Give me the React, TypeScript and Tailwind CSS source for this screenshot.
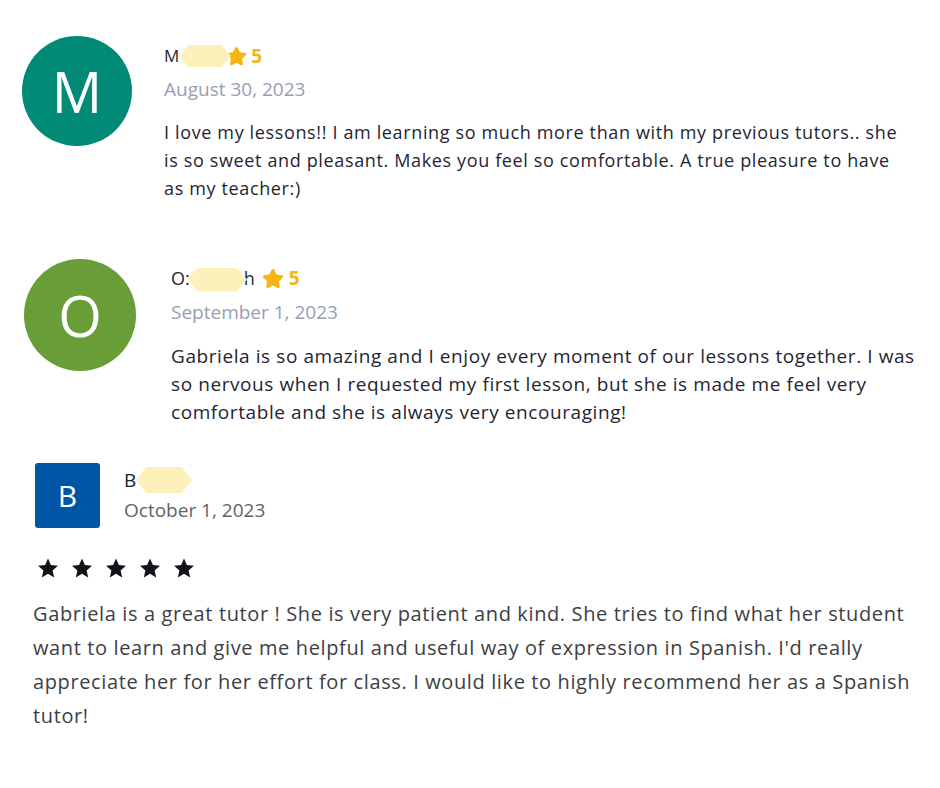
import { Star } from "lucide-react";

function Redact({ className }: { className: string }) {
  return (
    <span
      className={`absolute bg-[#fdf0bb] [clip-path:polygon(18%_0,82%_0,100%_50%,82%_100%,18%_100%,0_50%)] ${className}`}
    />
  );
}

function SmallStars() {
  return (
    <div className="flex items-center gap-[10px]">
      {[0, 1, 2, 3, 4].map((i) => (
        <svg key={i} viewBox="0 0 24 24" className="h-[24px] w-[24px] fill-[#111318]">
          <path d="M12 2.5l2.9 6.6 7.1.6-5.4 4.7 1.6 7-6.2-3.7-6.2 3.7 1.6-7L2 9.7l7.1-.6z" />
        </svg>
      ))}
    </div>
  );
}

export default function App() {
  return (
    <div className="w-[940px] h-[788px] bg-white text-[#1f2533] font-['Open_Sans',sans-serif]">
      {/* first review */}
      <div className="flex pl-[22px] pt-[36px]">
        <div className="w-[110px] h-[110px] shrink-0 rounded-full bg-[#018a76] flex items-center justify-center text-white text-[56px]">
          M
        </div>
        <div className="ml-[32px] pt-[8px]">
          <div className="relative flex items-center h-[24px] text-[17px]">
            <span>M</span>
            <Redact className="left-[15px] top-[1px] w-[52px] h-[22px]" />
            <span className="ml-[47px] flex items-center gap-[4px] text-[#f5b614] font-bold text-[19px]">
              <Star className="w-[21px] h-[21px] fill-[#f5b614] stroke-[#f5b614]" />
              5
            </span>
          </div>
          <div className="mt-[7px] text-[19px] text-[#94a0b4]">August 30, 2023</div>
          <p className="mt-[14px] text-[18px] leading-[28px] tracking-[0.64px] whitespace-nowrap">
            I love my lessons!! I am learning so much more than with my previous tutors.. she
            <br />
            is so sweet and pleasant. Makes you feel so comfortable. A true pleasure to have
            <br />
            as my teacher:)
          </p>
        </div>
      </div>

      {/* second review */}
      <div className="flex pl-[24px] pt-[57px]">
        <div className="w-[112px] h-[112px] shrink-0 rounded-full bg-[#689d38] flex items-center justify-center text-white text-[56px]">
          O
        </div>
        <div className="ml-[35px] pt-[8px]">
          <div className="relative flex items-center h-[24px] text-[18px]">
            <span>O:</span>
            <span className="ml-[54px]">h</span>
            <Redact className="left-[16px] top-[1px] w-[60px] h-[24px]" />
            <span className="ml-[7px] flex items-center gap-[5px] text-[#f5b614] font-bold text-[19px]">
              <Star className="w-[22px] h-[22px] fill-[#f5b614] stroke-[#f5b614]" />
              5
            </span>
          </div>
          <div className="mt-[7px] text-[19px] text-[#94a0b4]">September 1, 2023</div>
          <p className="mt-[16px] text-[19px] leading-[28px] tracking-[0.58px] whitespace-nowrap">
            Gabriela is so amazing and I enjoy every moment of our lessons together. I was
            <br />
            so nervous when I requested my first lesson, but she is made me feel very
            <br />
            comfortable and she is always very encouraging!
          </p>
        </div>
      </div>

      {/* third review */}
      <div className="pl-[33px] pt-[37px]">
        <div className="flex">
          <div className="w-[65px] h-[65px] ml-[2px] rounded-[3px] bg-[#0155a5] flex items-center justify-center text-white text-[30px]">
            B
          </div>
          <div className="ml-[24px] pt-[3px]">
            <div className="relative h-[26px] text-[19px] text-[#202124]">
              <span>B</span>
              <Redact className="left-[12px] top-[1px] w-[56px] h-[26px]" />
            </div>
            <div className="mt-[4px] text-[19px] text-[#5f6368]">October 1, 2023</div>
          </div>
        </div>
        <div className="mt-[28px] ml-[3px]">
          <SmallStars />
        </div>
        <p className="mt-[17px] text-[20px] leading-[34px] tracking-[0.62px] text-[#3c4043] whitespace-nowrap">
          Gabriela is a great tutor ! She is very patient and kind. She tries to find what her student
          <br />
          want to learn and give me helpful and useful way of expression in Spanish. I'd really
          <br />
          appreciate her for her effort for class. I would like to highly recommend her as a Spanish
          <br />
          tutor!
        </p>
      </div>
    </div>
  );
}
